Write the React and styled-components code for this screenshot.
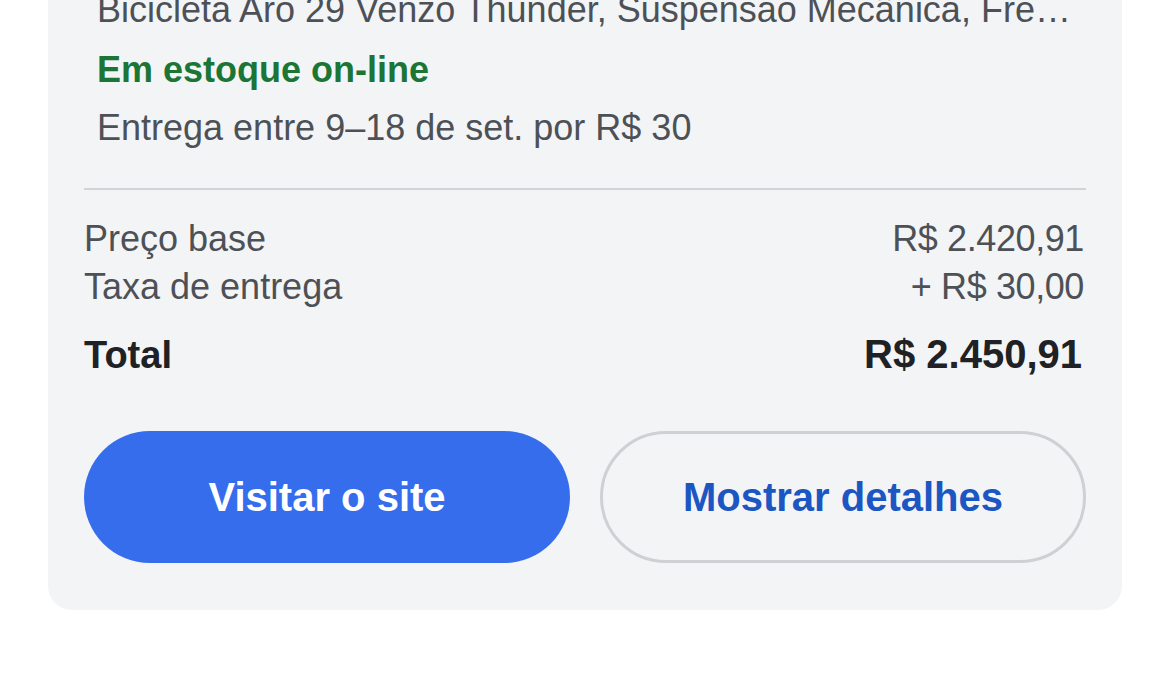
import React from "react";
import styled, { createGlobalStyle } from "styled-components";

const GlobalStyle = createGlobalStyle`
  html, body {
    margin: 0;
    padding: 0;
    background: #ffffff;
    font-family: "Liberation Sans", Arial, Helvetica, sans-serif;
    -webkit-font-smoothing: antialiased;
    overflow: hidden;
  }
`;

const Page = styled.div`
  width: 1170px;
  height: 676px;
  padding: 0 48px;
  box-sizing: border-box;
  background: #ffffff;
`;

const Card = styled.section`
  margin-top: -50px;
  background: #f3f4f6;
  border-radius: 0 0 24px 24px;
  padding: 36px 36px 47px;
  display: flex;
  flex-direction: column;
`;

const Info = styled.div`
  padding: 0 13px;
  display: flex;
  flex-direction: column;
`;

const Line = styled.div`
  font-size: 36px;
  line-height: 48px;
  color: ${(p) => (p.$green ? "#1b7535" : "#4d5156")};
  font-weight: ${(p) => (p.$green ? 700 : 400)};
  margin-bottom: ${(p) => p.$gap || 0}px;
  white-space: nowrap;
  overflow: hidden;
  text-overflow: ellipsis;
`;

const Divider = styled.hr`
  border: none;
  height: 2px;
  background: #d2d3d7;
  margin: 36px 0 25px;
`;

const Row = styled.div`
  display: flex;
  justify-content: space-between;
  align-items: baseline;
  font-size: ${(p) => (p.$total ? 38 : 36)}px;
  line-height: 48px;
  font-weight: ${(p) => (p.$total ? 700 : 400)};
  color: ${(p) => (p.$total ? "#202124" : "#4d5156")};
  margin-top: ${(p) => (p.$total ? 19 : 0)}px;
`;

const Amount = styled.span`
  font-size: ${(p) => (p.$total ? 40 : 36)}px;
  letter-spacing: ${(p) => (p.$total ? "0" : "-0.4px")};
  margin-right: ${(p) => (p.$total ? 4 : 2)}px;
`;

const Buttons = styled.div`
  display: grid;
  grid-template-columns: 1fr 1fr;
  gap: 30px;
  margin-top: 52px;
`;

const Button = styled.button`
  height: 132px;
  border-radius: 66px;
  font-family: "Liberation Sans", Arial, Helvetica, sans-serif;
  font-size: 40px;
  font-weight: 700;
  cursor: pointer;
  box-sizing: border-box;
  background: ${(p) => (p.$primary ? "#356ded" : "transparent")};
  color: ${(p) => (p.$primary ? "#ffffff" : "#1b56c2")};
  border: ${(p) => (p.$primary ? "none" : "3px solid #cfd0d4")};
`;

export default function App() {
  return (
    <>
      <GlobalStyle />
      <Page>
        <Card>
          <Info>
            <Line $gap={12}>
              Bicicleta Aro 29 Venzo Thunder, Suspensão Mecânica, Fre…
            </Line>
            <Line $green $gap={10}>Em estoque on-line</Line>
            <Line>Entrega entre 9–18 de set. por R$ 30</Line>
          </Info>
          <Divider />
          <Row>
            <span>Preço base</span>
            <Amount>R$ 2.420,91</Amount>
          </Row>
          <Row>
            <span>Taxa de entrega</span>
            <Amount>+ R$ 30,00</Amount>
          </Row>
          <Row $total>
            <span>Total</span>
            <Amount $total>R$ 2.450,91</Amount>
          </Row>
          <Buttons>
            <Button $primary>Visitar o site</Button>
            <Button>Mostrar detalhes</Button>
          </Buttons>
        </Card>
      </Page>
    </>
  );
}
